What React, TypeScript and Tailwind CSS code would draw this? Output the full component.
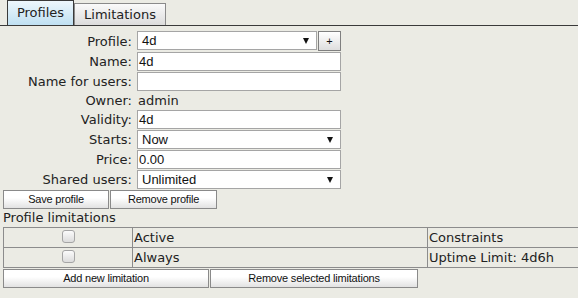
const FIELDS = [
  { label: 'Profile:', kind: 'profile', value: '4d' },
  { label: 'Name:', kind: 'input', value: '4d' },
  { label: 'Name for users:', kind: 'input', value: '' },
  { label: 'Owner:', kind: 'text', value: 'admin' },
  { label: 'Validity:', kind: 'input', value: '4d' },
  { label: 'Starts:', kind: 'select', value: 'Now' },
  { label: 'Price:', kind: 'input', value: '0.00' },
  { label: 'Shared users:', kind: 'select', value: 'Unlimited' },
]

const LIMITS = [
  { name: 'Active', constraints: 'Constraints' },
  { name: 'Always', constraints: 'Uptime Limit: 4d6h' },
]

function Arrow() {
  return (
    <svg width="6" height="6" viewBox="0 0 6 6" className="absolute right-[7px] top-[6px]">
      <path d="M0 0 H6 L3 6 Z" fill="#111" />
    </svg>
  )
}

function Btn({ label, w }: { label: string; w: string }) {
  return (
    <div
      className={`${w} h-[19px] flex items-center justify-center border border-[#8a8a8a] bg-gradient-to-b from-white from-40% to-[#e2e2e2] font-['Liberation_Sans',Arial,sans-serif] text-[11px] tracking-[-0.2px] text-[#111]`}
    >
      {label}
    </div>
  )
}

function Check() {
  return (
    <span className="inline-block w-[13px] h-[13px] rounded-[3px] border border-[#a5a5a5] bg-gradient-to-b from-[#fbfbfb] to-[#dcdcdc]" />
  )
}

function Field({ kind, value }: { kind: string; value: string }) {
  const font = "font-['Liberation_Sans',Arial,sans-serif] text-[13px] text-[#111]"
  if (kind === 'text') return <div className="h-[17px] leading-[17px] pl-[1px]">{value}</div>
  if (kind === 'profile')
    return (
      <div className="flex gap-[1px]">
        <div className={`relative w-[180px] h-[19px] bg-white border border-[#a5a5a5] pl-[4px] leading-[17px] ${font}`}>
          {value}
          <Arrow />
        </div>
        <div className="w-[23px] h-[20px] flex items-center justify-center border border-[#7f7f7f] bg-gradient-to-b from-white to-[#dedede] font-['Liberation_Sans',Arial,sans-serif] text-[11px] text-[#111]">
          +
        </div>
      </div>
    )
  if (kind === 'select')
    return (
      <div className={`relative w-[204px] h-[19px] bg-white border border-[#a5a5a5] pl-[4px] leading-[17px] ${font}`}>
        {value}
        <Arrow />
      </div>
    )
  return (
    <div className={`w-[204px] h-[19px] bg-white border border-[#a5a5a5] pl-[1px] leading-[17px] ${font}`}>
      {value}
    </div>
  )
}

export default function App() {
  return (
    <div className="w-[578px] h-[298px] overflow-hidden bg-[#ebebe4] font-['DejaVu_Sans',Verdana,sans-serif] text-[13px] text-[#222]">
      <div className="flex items-end h-[26px] pl-[7px] border-b border-[#3a3a3a]">
        <div className="w-[67px] h-[25px] flex items-center justify-center border border-b-0 border-[#3a3a3a] bg-gradient-to-b from-[#eef7fc] to-[#bfe0f2]">
          Profiles
        </div>
        <div className="w-[92px] h-[22px] flex items-center justify-center border border-b-0 border-[#8a8a8a] bg-gradient-to-b from-[#fafafa] to-[#dcdcdc]">
          Limitations
        </div>
      </div>

      <div className="grid grid-cols-[132px_auto] gap-x-[5px] gap-y-[1px] mt-[5px]">
        {FIELDS.map((f) => (
          <div key={f.label} className="contents">
            <div className="text-right leading-[17px] self-center">{f.label}</div>
            <Field kind={f.kind} value={f.value} />
          </div>
        ))}
      </div>

      <div className="flex gap-[1px] pl-[3px] mt-[1px]">
        <Btn label="Save profile" w="w-[106px]" />
        <Btn label="Remove profile" w="w-[107px]" />
      </div>

      <div className="pl-[3px] h-[18px] leading-[18px]">Profile limitations</div>

      <div className="pl-[3px]">
        <table className="w-[660px] border-collapse">
          <tbody>
            {LIMITS.map((l) => (
              <tr key={l.name} className="h-[20px]">
                <td className="w-[129px] border border-[#8c8c8c] text-center p-0 leading-none">
                  <Check />
                </td>
                <td className="w-[295px] border border-[#8c8c8c] p-0 pl-[1px] leading-[18px]">{l.name}</td>
                <td className="border border-[#8c8c8c] p-0 pl-[1px] leading-[18px]">{l.constraints}</td>
              </tr>
            ))}
          </tbody>
        </table>
      </div>

      <div className="flex gap-[1px] pl-[3px] mt-[1px]">
        <Btn label="Add new limitation" w="w-[206px]" />
        <Btn label="Remove selected limitations" w="w-[208px]" />
      </div>
    </div>
  )
}
